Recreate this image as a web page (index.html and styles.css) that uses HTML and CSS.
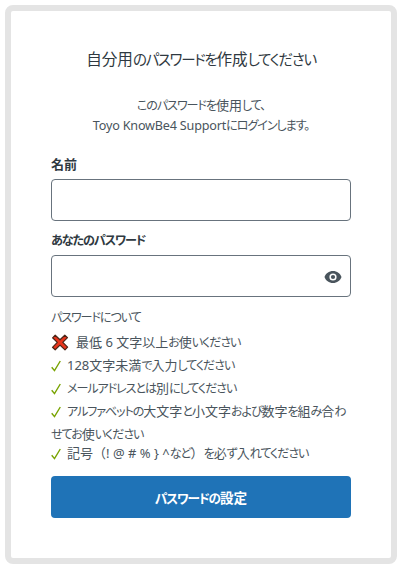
FILE: index.html
```html
<!DOCTYPE html>
<html lang="ja">
<head>
  <meta charset="UTF-8" />
  <meta name="viewport" content="width=device-width, initial-scale=1.0"/>
  <title>パスワードの作成</title>
  <link rel="stylesheet" href="styles.css">
</head>
<body>

  <div class="signup-container">
    <h1 class="title">自分用<span class="kana">のパスワードを</span>作成<span class="kana">してください</span></h1>
    <p class="intro"><span class="kana">このパスワードを</span>使用<span class="kana">して、</span><br>
      <span class="latin">Toyo KnowBe4 Support</span><span class="kana">にログインします。</span></p>

    <form>
      <label for="name">名前</label>
      <input type="text" id="name" />

      <label for="password"><span class="kana">あなたのパスワード</span></label>
      <div class="form-group">
        <input type="password" id="password" />
        <svg class="toggle-password" viewBox="0 0 18 12" width="18" height="12">
          <path fill="#49545c" fill-rule="evenodd" d="M9 0C5 0 1.700 2.400.500 6 1.700 9.600 5 12 9 12s7.300-2.400 8.500-6C16.300 2.400 13 0 9 0zm0 9.600a3.600 3.600 0 1 1 0-7.200 3.600 3.600 0 0 1 0 7.200z"/>
          <circle fill="#49545c" cx="9" cy="6" r="2.100"/>
        </svg>
      </div>

      <p class="rules-title"><span class="kana">パスワードについて</span></p>
      <ul class="rules">
        <li><svg class="cross" viewBox="0 0 18 17" width="18" height="17"><path fill="#e8351c" stroke="#4a2416" stroke-width="1.200" stroke-linejoin="round" d="M4.200 1.200 9 5.800 13.800 1.200 16.500 3.600 11.800 8.300 16.600 13.200 14 15.900 9 11.100 4.200 15.800 1.500 13.300 6.300 8.400 1.600 3.800z"/></svg>最低 6 文字以上<span class="kana">お</span>使<span class="kana">いください</span></li>
        <li><svg class="check" viewBox="0 0 10 12" width="10" height="12"><path d="M.700 7.200 3.500 10.600 9.300 1"/></svg>128文字未満<span class="kana">で</span>入力<span class="kana">してください</span></li>
        <li><svg class="check" viewBox="0 0 10 12" width="10" height="12"><path d="M.700 7.200 3.500 10.600 9.300 1"/></svg><span class="kana">メールアドレスとは</span>別<span class="kana">にしてください</span></li>
        <li><svg class="check" viewBox="0 0 10 12" width="10" height="12"><path d="M.700 7.200 3.500 10.600 9.300 1"/></svg><span class="kana">アルファベットの</span>大文字<span class="kana">と</span>小文字<span class="kana">および</span>数字<span class="kana">を</span>組<span class="kana">み</span>合<span class="kana">わ</span><br><span class="kana">せてお</span>使<span class="kana">いください</span></li>
        <li class="last"><svg class="check" viewBox="0 0 10 12" width="10" height="12"><path d="M.700 7.200 3.500 10.600 9.300 1"/></svg>記号（! @ # % } ^<span class="kana">など</span>）<span class="kana">を</span>必<span class="kana">ず</span>入<span class="kana">れてください</span></li>
      </ul>

      <button type="submit"><span class="kana">パスワードの</span>設定</button>
    </form>
  </div>

</body>
</html>
```
FILE: styles.css
```css
* {
  box-sizing: border-box;
}

body {
  margin: 0;
  padding: 5px;
  background-color: white;
  font-family: "Noto Sans", "Noto Sans CJK JP", sans-serif;
  font-size: 13px;
  line-height: 20px;
  color: #49545c;
  white-space: nowrap;
}

.kana {
  font-size: 0.93em;
  line-height: 1;
  font-feature-settings: "palt";
  letter-spacing: -0.09em;
}

.latin {
  font-size: 12.6px;
  line-height: 1;
  letter-spacing: -0.18px;
}

.signup-container {
  width: 392px;
  height: 559px;
  padding: 38px 40px 0;
  border: 6px solid #e4e4e4;
  border-radius: 8px;
}

.title {
  margin: 0 0 26px;
  font-size: 15.6px;
  font-weight: 400;
  line-height: 20px;
  text-align: center;
  color: #2f3941;
}

.intro {
  height: 40px;
  margin: 0 0 19px;
  text-align: center;
}

label {
  display: block;
  height: 20px;
  margin-bottom: 5px;
  font-weight: 600;
  color: #2f3941;
}

input {
  display: block;
  width: 100%;
  height: 42px;
  padding: 0 12px;
  border: 1px solid #68737d;
  border-radius: 4px;
  background-color: white;
  font-size: 14px;
}

#name {
  margin-bottom: 9px;
}

.form-group {
  position: relative;
}

.toggle-password {
  position: absolute;
  right: 9px;
  top: 16px;
  cursor: pointer;
}

.rules-title {
  height: 20px;
  margin: 10px 0 4px;
}

.rules {
  margin: 0;
  padding: 0;
  list-style: none;
  line-height: 23px;
}

.rules li.last {
  height: 20px;
  line-height: 20px;
  margin-top: -3px;
}

.cross {
  margin: 0 7px 0 0;
  vertical-align: -4px;
}

.check {
  margin-right: 6px;
  vertical-align: -2px;
  fill: none;
  stroke: #78a300;
  stroke-width: 1.4;
}

button {
  display: block;
  width: 100%;
  height: 42px;
  margin-top: 13px;
  border: none;
  border-radius: 4px;
  background-color: #1f73b7;
  color: white;
  font-family: inherit;
  font-size: 13.6px;
  font-weight: 600;
  cursor: pointer;
}
```
